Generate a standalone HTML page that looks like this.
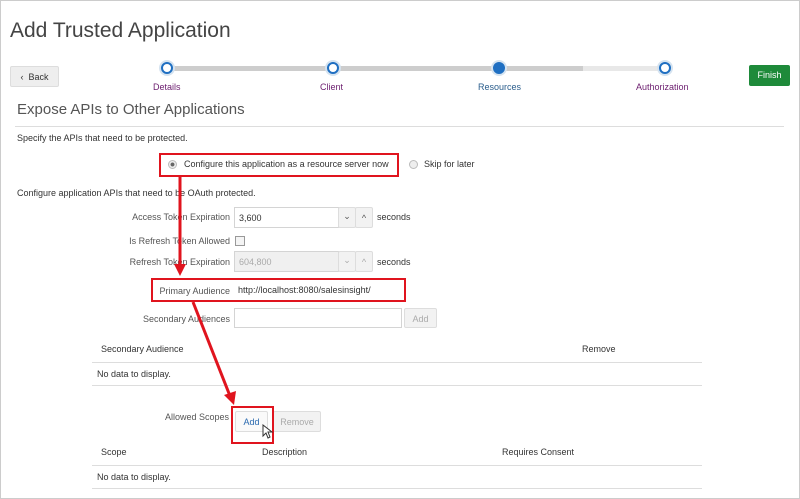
<!DOCTYPE html><html><head><style>
body{margin:0;width:800px;height:499px;overflow:hidden;background:#fff;font-family:"Liberation Sans",sans-serif;position:relative}
.a{position:absolute;white-space:nowrap}
.s{font-size:9px;color:#333}
.r{text-align:right;width:220px;font-size:9px;color:#555}
.in{position:absolute;border:1px solid #d4d4d4;background:#fff;box-sizing:border-box;font-size:9px;color:#333;padding:5px 0 0 4px}
.btn{position:absolute;border:1px solid #ddd;background:#f2f2f2;box-sizing:border-box;font-size:9px;color:#aaa;text-align:center;border-radius:2px}
.red{position:absolute;border:2px solid #e0141e;box-sizing:border-box}
.c{position:absolute;width:8px;height:8px;border:2px solid #1f6fc2;border-radius:50%;background:#fff;box-shadow:0 0 0 2px #d5e3f0}
</style></head><body>
<div style="position:absolute;inset:0;border:1px solid #ccc"></div>
<div class="a" style="left:10px;top:19px;font-size:21px;color:#444">Add Trusted Application</div>
<div class="btn" style="left:10px;top:66px;width:49px;height:21px;color:#333;padding-top:5px;background:#eee">‹ &nbsp;Back</div>
<div class="a" style="left:167px;top:66px;width:416px;height:5px;background:#cdcdcd"></div>
<div class="a" style="left:583px;top:66px;width:82px;height:5px;background:#e8e8e8"></div>
<div class="c" style="left:161px;top:62px"></div>
<div class="c" style="left:327px;top:62px"></div>
<div class="c" style="left:493px;top:62px;background:#1f6fc2"></div>
<div class="c" style="left:659px;top:62px"></div>
<div class="a s" style="left:153px;top:82px;color:#6b1c6e">Details</div>
<div class="a s" style="left:320px;top:82px;color:#6b1c6e">Client</div>
<div class="a s" style="left:478px;top:82px;color:#2a5d8c">Resources</div>
<div class="a s" style="left:636px;top:82px;color:#6b1c6e">Authorization</div>
<div class="a" style="left:749px;top:65px;width:41px;height:21px;background:#1e8a3a;color:#fff;font-size:9px;text-align:center;line-height:21px;border-radius:2px">Finish</div>
<div class="a" style="left:17px;top:101px;font-size:15px;color:#555">Expose APIs to Other Applications</div>
<div class="a" style="left:15px;top:126px;width:769px;height:1px;background:#ddd"></div>
<div class="a s" style="left:17px;top:133px">Specify the APIs that need to be protected.</div>
<div class="red" style="left:159px;top:153px;width:240px;height:24px"></div>
<div class="a" style="left:168px;top:160px;width:7px;height:7px;border-radius:50%;border:1px solid #bbb;background:radial-gradient(#666 35%,#eee 45%)"></div>
<div class="a s" style="left:184px;top:159px">Configure this application as a resource server now</div>
<div class="a" style="left:409px;top:160px;width:7px;height:7px;border-radius:50%;border:1px solid #bbb;background:#eee"></div>
<div class="a s" style="left:424px;top:159px">Skip for later</div>
<div class="a s" style="left:17px;top:188px">Configure application APIs that need to be OAuth protected.</div>
<div class="a r" style="left:10px;top:212px">Access Token Expiration</div>
<div class="in" style="left:234px;top:207px;width:105px;height:21px">3,600</div>
<div class="btn" style="left:338px;top:207px;width:18px;height:21px;color:#555;padding-top:3px">⌄</div>
<div class="btn" style="left:355px;top:207px;width:18px;height:21px;color:#555;padding-top:5px">^</div>
<div class="a s" style="left:377px;top:212px">seconds</div>
<div class="a r" style="left:10px;top:236px">Is Refresh Token Allowed</div>
<div class="a" style="left:235px;top:236px;width:8px;height:8px;border:1px solid #999;background:#f4f4f4"></div>
<div class="a r" style="left:10px;top:257px">Refresh Token Expiration</div>
<div class="in" style="left:234px;top:251px;width:105px;height:21px;background:#f0f0f0;color:#aaa">604,800</div>
<div class="btn" style="left:338px;top:251px;width:18px;height:21px;padding-top:3px">⌄</div>
<div class="btn" style="left:355px;top:251px;width:18px;height:21px;padding-top:5px">^</div>
<div class="a s" style="left:377px;top:257px">seconds</div>
<div class="red" style="left:151px;top:278px;width:255px;height:24px"></div>
<div class="a r" style="left:10px;top:286px">Primary Audience</div>
<div class="in" style="left:234px;top:280px;width:170px;height:20px;border:none">http://localhost:8080/salesinsight/</div>
<div class="a r" style="left:10px;top:314px">Secondary Audiences</div>
<div class="in" style="left:234px;top:308px;width:168px;height:20px"></div>
<div class="btn" style="left:404px;top:308px;width:33px;height:20px;padding-top:5px">Add</div>
<div class="a s" style="left:101px;top:344px">Secondary Audience</div>
<div class="a s" style="left:582px;top:344px">Remove</div>
<div class="a" style="left:92px;top:362px;width:610px;height:1px;background:#ddd"></div>
<div class="a s" style="left:97px;top:369px">No data to display.</div>
<div class="a" style="left:92px;top:385px;width:610px;height:1px;background:#ddd"></div>
<div class="a r" style="left:9px;top:412px">Allowed Scopes</div>
<div class="btn" style="left:235px;top:411px;width:33px;height:21px;color:#2a6ab0;background:#fafafa;padding-top:5px">Add</div>
<div class="btn" style="left:273px;top:411px;width:48px;height:21px;padding-top:5px">Remove</div>
<div class="red" style="left:231px;top:406px;width:43px;height:38px"></div>
<svg class="a" style="left:260px;top:424px" width="14" height="16"><path d="M3 1v11l3-3 2 5 2-1-2-5h4z" fill="#fff" stroke="#333" stroke-width="1"/></svg>
<div class="a s" style="left:101px;top:447px">Scope</div>
<div class="a s" style="left:262px;top:447px">Description</div>
<div class="a s" style="left:502px;top:447px">Requires Consent</div>
<div class="a" style="left:92px;top:465px;width:610px;height:1px;background:#ddd"></div>
<div class="a s" style="left:97px;top:472px">No data to display.</div>
<div class="a" style="left:92px;top:488px;width:610px;height:1px;background:#ddd"></div>
<svg class="a" style="left:0;top:0" width="800" height="499">
<line x1="180" y1="177" x2="180" y2="266" stroke="#e0141e" stroke-width="3"/>
<path d="M174 264 L186 264 L180 276 Z" fill="#e0141e"/>
<line x1="193" y1="302" x2="230" y2="396" stroke="#e0141e" stroke-width="3"/>
<path d="M224 395 L236 391 L234 405 Z" fill="#e0141e"/>
</svg>
</body></html>
